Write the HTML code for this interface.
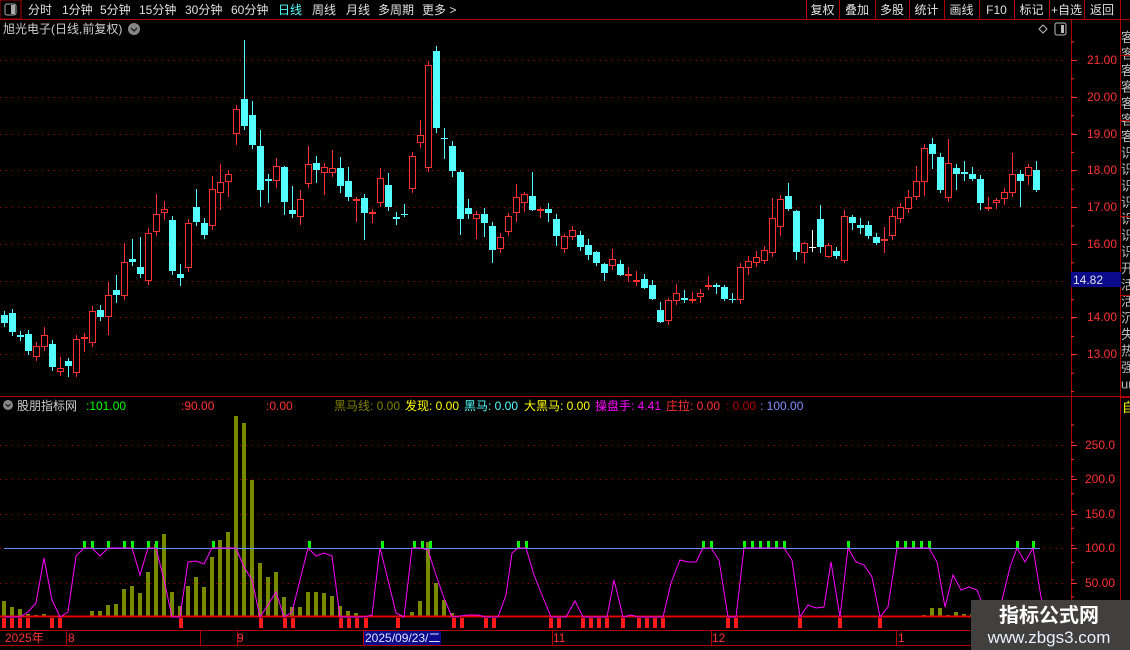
<!DOCTYPE html>
<html><head><meta charset="utf-8"><style>
html,body{margin:0;padding:0;background:#000;width:1130px;height:650px;overflow:hidden;font-family:"Liberation Sans","Noto Sans CJK SC",sans-serif;}
svg{position:absolute;left:0;top:0}
</style></head><body>
<svg id="s" width="1130" height="650" xmlns="http://www.w3.org/2000/svg" font-family="Liberation Sans, Noto Sans CJK SC, sans-serif">
</svg>
<script>
const S=document.getElementById('s');let h='';
function r(x,y,w,hh,f,extra){h+=`<rect x="${x}" y="${y}" width="${w}" height="${hh}" fill="${f}" ${extra||''}/>`;}
function l(x1,y1,x2,y2,c,extra){h+=`<line x1="${x1}" y1="${y1}" x2="${x2}" y2="${y2}" stroke="${c}" ${extra||''}/>`;}
function t(x,y,s,c,fs,extra){h+=`<text x="${x}" y="${y}" fill="${c}" font-size="${fs||12}" ${extra||''}>${s}</text>`;}
const RED='#ff3232',CY='#54ffff',DR='#b00000';
// toolbar
l(0,19.5,1130,19.5,DR);
r(0,0,21,19,'none','stroke="#b00000"');
r(5,4,11,11,'#000','stroke="#aaa" rx="2"');r(11,5,4,9,'#aaa');
const tb=[['分时',28],['1分钟',62],['5分钟',100],['15分钟',139],['30分钟',185],['60分钟',231],['日线',278],['周线',312],['月线',346],['多周期',378],['更多 &gt;',422]];
tb.forEach(a=>t(a[1],14,a[0],a[0]=='日线'?'#54ffff':'#e0e0e0',12));
const sep=[806,839,875,909,944,979,1014,1049,1084,1120];
sep.forEach(x=>l(x+.5,0,x+.5,19,DR));
const btn=['复权','叠加','多股','统计','画线','F10','标记','+自选','返回'];
btn.forEach((b,i)=>{const cx=(sep[i]+sep[i+1])/2;t(cx,14,b,'#e0e0e0',12,'text-anchor="middle"');});
// title
t(3,33,'旭光电子(日线,前复权)','#d0d0d0',12);
h+=`<circle cx="134" cy="29" r="6" fill="#888"/><path d="M131 28 L134 31 L137 28" stroke="#222" fill="none" stroke-width="1.5"/>`;
h+=`<path d="M1043 25 L1047 29 L1043 33 L1039 29Z" stroke="#bbb" fill="none"/>`;
r(1055,23,11,12,'none','stroke="#bbb" rx="2"');r(1061,25,3,8,'#bbb');
// axes
l(1071.5,20,1071.5,650,DR);l(1120.5,20,1120.5,650,DR);
l(0,396.5,1130,396.5,DR);
l(0,630.5,1071,630.5,DR);l(0,645.5,1071,645.5,DR);
// right strip chars
const rs='客客客客客客客识识识识识识识开活活沉失热强';
for(let i=0;i<22;i++){t(1121,42+i*16.5,rs[i],'#bbb',13);}
[55,120,216,295,397].forEach(y=>l(1120,y+.5,1130,y+.5,DR));
// price grid
const pl=[[60,'21.00'],[97,'20.00'],[134,'19.00'],[170,'18.00'],[207,'17.00'],[244,'16.00'],[281,''],[317,'14.00'],[354,'13.00']];
pl.forEach(p=>{l(0,p[0]+.5,1068,p[0]+.5,'#a00000','stroke-dasharray="1 5"');l(1071,p[0]+.5,1077,p[0]+.5,RED);if(p[1])t(1087,p[0]+4,p[1],RED,12);});
for(let y=42;y<396;y+=18.4)l(1071,y,1074,y,RED);
r(1071,272,50,15,'#0a0a8a');t(1073,284,'14.82','#e0e0e0',12);
// candles [top,bottom,red,hi,lo]
const C=[[315,323,0],[313,332,0],[335,337,0],[334,351,0],[346,357,1],[335,347,1,327],[344,367,0],[368,372,1,357],[361,366,0,358,377],[339,373,1],[337,339,1,,352],[311,343,1,306],[310,317,0,305],[295,317,1,282,335],[290,295,0,275,303],[262,296,1,243],[259,262,0,239],[267,274,0,237],[233,281,1,228],[214,232,1,194],[209,213,1,201,220],[220,271,0],[274,278,0,264,286],[223,268,1],[207,222,0,189],[223,235,0,218],[189,226,1,176],[182,193,1,164,210],[174,182,1,170,197],[109,134,1,,145],[99,126,0,40],[115,145,0,101],[146,190,0,130,207],[179,181,0,174,203],[166,181,1,158,188],[167,202,0,166,215],[210,214,0,186,218],[199,217,1,190,225],[164,184,1,146,188],[163,170,0,156,183],[167,173,1,,195],[168,173,1,150,177],[168,186,0,157,193],[181,197,0,167,201],[199,201,1,197,222],[198,213,0,194,240],[212,213,1,209,223],[178,203,1,168],[185,207,0,173],[217,219,0,212,225],[214,215,0,204,217],[156,189,1],[135,143,1,120,148],[65,168,1],[51,128,0,46,133],[138,139,0,128,159],[146,171,0,141,177],
[172,219,0,170,235],[208,214,0,199,219],[214,219,1,211,239],[214,223,0,208,237],[226,250,0,,263],[237,249,1,,253],[216,232,1,213,236],[197,213,1,184,222],[194,203,1,192,212],[196,210,0,172,211],[209,211,1,207,218],[209,213,0,203,222],[219,236,0,214,246],[236,249,1,234,253],[230,237,1,226,240],[235,247,0],[245,255,0,239,260],[252,263,0,251,266],[264,273,0,263,281],[259,266,1,249,270],[264,275,0,,276],[274,276,1,267,282],[280,281,1,271,286],[279,288,0,274,289],[285,299,0,280,300],[310,322,0,302,323],[300,321,1,298],[293,301,1,284],[298,300,0,290,303],[299,301,1,292,303],[293,297,1,,303],[285,286,1,276,290],[285,287,0,283,294],[287,299,0,285,301],[299,300,0,293,303],[267,300,1,,304],[261,268,1,256,275],[257,263,1,251],[250,261,1,,264],[218,253,1,198],[199,227,1,195,236],[196,209,0,183,211],[211,252,0,210,260],[243,253,1,242,263],[247,248,2,230,252],[219,247,0,205,253],[245,257,1,243,258],[251,256,0,247,259],[216,261,1,210,263],[217,223,0,215,230],[225,228,0,218,234],[225,236,0,,239],[237,243,0,233,245],[239,241,1,227,253],[216,236,1,209],[207,219,1,,223],[197,209,1,190],[181,197,1,166,200],[148,182,1,,196],[144,154,0,138,169],[157,190,0,,193],[163,198,1,139],[168,174,0,,190],[172,174,0,161,181],[174,179,0,167,181],[179,203,0,,210],[207,208,1,197,211],[200,203,1,198,209],[192,199,1,,205],[174,193,1,153,197],[174,181,0,,207],[167,176,1,164,185],[170,190,0,161,192]];
C.forEach((c,i)=>{const x=4+8*i;const col=c[2]==1?RED:(c[2]==2?'#fff':CY);const hi=c[3]!==undefined?c[3]:c[0]-4;const lo=c[4]!==undefined?c[4]:c[1]+4;
l(x+.5,hi,x+.5,lo,col);
if(c[2]==1){if(c[1]-c[0]<=2){r(x-3,c[0],7,2,col);}else r(x-2.5,c[0]+.5,6,c[1]-c[0]-1,'#000',`stroke="${col}"`);}
else r(x-3,c[0],7,Math.max(1,c[1]-c[0]),col);});
// lower panel header
h+=`<circle cx="8" cy="405" r="5" fill="#888"/><path d="M5.5 404 L8 406.5 L10.5 404" stroke="#222" fill="none" stroke-width="1.3"/>`;
const lg=[[17,'股朋指标网','#ccc'],[86,':101.00','#00ff00'],[181,':90.00',RED],[266,':0.00',RED],[334,'黑马线: 0.00','#808000'],[405,'发现: 0.00','#ffff00'],[464,'黑马: 0.00','#54ffff'],[524,'大黑马: 0.00','#ffff00'],[595,'操盘手: 4.41','#ff00ff'],[666,'庄拉: 0.00',RED],[726,': 0.00',DR],[760,': 100.00','#7f8fff']];
lg.forEach(a=>t(a[0],410,a[1],a[2],12));
t(1122,412,'自','#ffff00',13);
// lower grid
[[445,'250.0'],[479,'200.0'],[514,'150.0'],[548,'100.0'],[583,'50.00']].forEach(p=>{l(0,p[0]+.5,1068,p[0]+.5,'#a00000','stroke-dasharray="1 5"');l(1071,p[0]+.5,1077,p[0]+.5,RED);t(1085,p[0]+4,p[1],RED,12);});
for(let y=425;y<630;y+=17.2)l(1071,y,1074,y,RED);
// olive bars
const B={0:601,1:607,2:609,3:614,4:615,5:614,9:616,10:616,11:611,12:611,13:605,14:604,15:589,16:586,17:593,18:572,19:544,20:534,21:592,22:606,23:586,24:577,25:587,26:557,27:540,28:532,29:416,30:423,31:480,32:563,33:577,34:572,35:597,36:607,37:607,38:592,39:592,40:593,41:596,42:606,43:611,44:613,45:616,47:616,51:612,52:601,53:542,54:583,55:600,56:613,115:615,116:608,117:608,118:615,119:612,120:614,121:614};
for(const k in B){const x=4+8*k;r(x-2,B[k],4,617-B[k],'#7a8a00');}
// baseline dots and red line
l(0,617,1040,617,'#707000','stroke-dasharray="2 6"');
l(0,616.5,1071,616.5,'#e00000','stroke-width="2"');
// red markers
[4,12,20,28,52,60,181,261,285,293,341,349,357,366,398,454,462,486,494,551,559,583,591,599,607,623,639,647,655,663,728,736,800,840,880].forEach(x=>r(x-2,618,4,10,'#ff1a1a'));
// blue line
l(4,548.5,1040,548.5,'#5f8cff');
// green ticks
[84,92,108,124,132,148,156,213,309,382,414,422,430,518,526,703,711,744,752,760,768,776,784,848,897,905,913,921,929,1017,1033].forEach(x=>r(x-1,541,3,7,'#00ff00'));
// magenta polyline
const M=[[4,617],[20,617],[28,612],[36,603],[44,558],[52,600],[60,617],[68,612],[76,556],[84,548],[92,548],[100,556],[108,548],[116,548],[124,548],[132,548],[140,575],[148,548],[156,548],[164,580],[172,617],[180,617],[188,562],[196,561],[204,564],[212,548],[236,548],[244,567],[252,580],[260,617],[268,605],[276,592],[284,617],[292,612],[300,580],[308,548],[316,556],[324,553],[332,556],[340,617],[364,617],[372,615],[380,548],[388,580],[396,613],[404,617],[412,548],[420,548],[428,550],[436,575],[444,598],[452,617],[468,615],[478,615],[486,617],[498,617],[506,595],[512,553],[518,548],[526,548],[534,575],[542,595],[551,617],[566,617],[575,601],[583,617],[607,617],[614,580],[623,617],[631,615],[639,617],[663,617],[671,583],[680,560],[688,562],[696,562],[703,548],[711,548],[719,560],[728,617],[736,617],[744,548],[784,548],[792,560],[800,617],[808,605],[816,608],[824,607],[831,562],[840,617],[848,548],[856,562],[864,565],[872,577],[880,617],[888,607],[897,548],[929,548],[937,562],[945,607],[953,575],[961,590],[969,587],[977,590],[985,610],[1002,600],[1010,567],[1017,548],[1025,562],[1033,548],[1041,597],[1045,617]];
h+=`<polyline points="${M.map(p=>p.join(',')).join(' ')}" fill="none" stroke="#ff00ff" stroke-width="1"/>`;
// date axis
[5,68,237,363,552,711,898].forEach(x=>{});
[66,200,237,363,552,711,896].forEach(x=>l(x+.5,631,x+.5,645,DR));
t(5,642,'2025年',RED,12);t(68,642,'8',RED,12);t(237,642,'9',RED,12);
r(364,631,77,14,'#0a0a8a');t(365,642,'2025/09/23/二','#e0e0ff',12);
t(553,642,'11',RED,12);t(712,642,'12',RED,12);t(898,642,'1',RED,12);
// watermark
r(971,600,159,50,'#423f3f');
t(1049,622,'指标公式网','#fff',20,'text-anchor="middle" font-weight="bold"');
t(1049,643,'www.zbgs3.com','#e8f0ff',17,'text-anchor="middle"');
S.innerHTML=h;
</script>
</body></html>
